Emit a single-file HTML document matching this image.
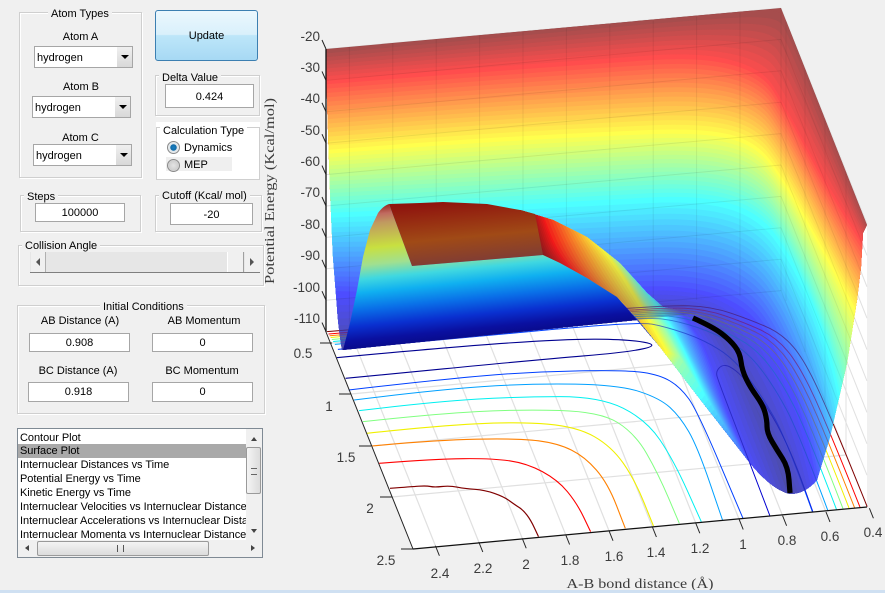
<!DOCTYPE html>
<html><head><meta charset="utf-8"><title>Surface Plot</title>
<style>
html,body{margin:0;padding:0;background:#f0f0f0;width:885px;height:593px;overflow:hidden}
body{position:relative;font-family:"Liberation Sans",sans-serif;font-size:11px;color:#000}
.a{position:absolute;white-space:nowrap}
.g{position:absolute;border:1px solid #cfcfcf;box-shadow:1px 1px 0 #fff,inset 1px 1px 0 #fff;box-sizing:border-box}
.t{position:absolute;background:#f0f0f0;padding:0 3px;white-space:nowrap;line-height:12px}
.c{position:absolute;text-align:center;white-space:nowrap;line-height:14px}
.i{position:absolute;background:#fff;border:1px solid #a6a6a6;box-sizing:border-box;text-align:center;line-height:19px}
.s{position:absolute;background:#fff;border:1px solid #a6a6a6;box-sizing:border-box;line-height:23px;padding-left:2px;width:99px;height:22px}
.s b{position:absolute;right:0;top:0;width:15px;height:20px;background:linear-gradient(#f0f0f0,#d8d8d8)}
.s b:after{content:"";position:absolute;left:4px;top:8px;border:4px solid transparent;border-top:4px solid #000;border-bottom:0}
svg{position:absolute;left:0;top:0}
.l{position:absolute;left:2px;height:14px;line-height:14px;white-space:nowrap;width:226px;overflow:hidden;letter-spacing:-.04px}
</style></head><body>

<svg id="plot" width="885" height="593" viewBox="0 0 885 593" xmlns="http://www.w3.org/2000/svg">
<defs>
<clipPath id="surf"><path d="M326,49 L781,8 L867,225 L863,233 L861,267 L857,300 L847,363 L830,437 L817,480 Q805,494 790,494 Q772,490 750,463 L703,403 L660,347 L637,320 L342,350 Q338,325 337,307 L333,257 L330,190 L327,100 Z"/></clipPath>
<clipPath id="fold"><path d="M520,210 L553,220 L587,237 L620,263 L647,293 L663,307 L730,320 L790,400 L800,494 L790,494 Q772,490 750,463 L703,403 L660,347 L637,318 L617,297 L587,278 L560,263 L543,255 Z"/></clipPath>
<linearGradient id="fs" gradientUnits="userSpaceOnUse" x1="380" y1="200" x2="395" y2="350">
<stop offset=".02" stop-color="#8f1a10"/><stop offset=".09" stop-color="#c06a60"/><stop offset=".15" stop-color="#c09a60"/><stop offset=".31" stop-color="#c8e040"/><stop offset=".42" stop-color="#a0e090"/><stop offset=".51" stop-color="#40d8e0"/><stop offset=".6" stop-color="#10b0f0"/><stop offset=".71" stop-color="#0a70e8"/><stop offset=".82" stop-color="#0a30d0"/><stop offset=".91" stop-color="#0a10a0"/><stop offset="1" stop-color="#080880"/>
</linearGradient>
<linearGradient id="cap" gradientUnits="userSpaceOnUse" x1="450" y1="202" x2="456" y2="268">
<stop offset="0" stop-color="#8f140e"/><stop offset=".55" stop-color="#a04a16"/><stop offset="1" stop-color="#7a3a3a"/>
</linearGradient>
<linearGradient id="dim" gradientUnits="userSpaceOnUse" x1="0" y1="240" x2="0" y2="320">
<stop offset="0" stop-color="#404060" stop-opacity="0"/><stop offset="1" stop-color="#404060" stop-opacity=".35"/>
</linearGradient>
</defs>
<polygon points="326,49 781,8 867,225 867,507 413,549 326,332" fill="#fff"/>
<g id="under"></g>
<g id="main" clip-path="url(#surf)"></g>
<g id="wallgrid" clip-path="url(#surf)"></g>
<g id="foldg" clip-path="url(#fold)"></g>
<g id="over" clip-path="url(#surf)"></g>
<path d="M343,350 L350,323 L357,290 L363,257 L370,230 L378,213 Q383,206 389,204 L412,266 L543,255 L560,263 L587,278 L617,297 L637,320 Z" fill="url(#fs)"/>
<path d="M389,204 L420,203 L443,202 L487,204 L520,210 L535,214 L543,255 L412,266 Z" fill="url(#cap)"/>
<g id="axes"></g>
<path id="traj" fill="none" stroke="#000" stroke-width="5.2" stroke-linejoin="round" d=""/>
<g font-family="Liberation Sans, sans-serif" font-size="13.5" fill="#3c3c3c" text-anchor="end">
<text x="320" y="41">-20</text><text x="320" y="72">-30</text><text x="320" y="103">-40</text><text x="320" y="135">-50</text><text x="320" y="166">-60</text><text x="320" y="197">-70</text><text x="320" y="229">-80</text><text x="320" y="260">-90</text><text x="320" y="292">-100</text><text x="320" y="323">-110</text>
</g>
<g font-family="Liberation Sans, sans-serif" font-size="13.5" fill="#3c3c3c" text-anchor="middle">
<text x="303" y="358">0.5</text><text x="329" y="411">1</text><text x="346" y="462">1.5</text><text x="370" y="513">2</text><text x="386" y="565">2.5</text>
<text x="873" y="537">0.4</text><text x="830" y="541">0.6</text><text x="787" y="545">0.8</text><text x="743" y="549">1</text><text x="700" y="553">1.2</text><text x="656" y="557">1.4</text><text x="614" y="561">1.6</text><text x="570" y="565">1.8</text><text x="526" y="569">2</text><text x="483" y="573">2.2</text><text x="440" y="578">2.4</text>
</g>
<text x="640" y="588" font-family="Liberation Serif, serif" font-size="14" fill="#3c3c3c" text-anchor="middle" textLength="147" lengthAdjust="spacingAndGlyphs">A-B bond distance (Å)</text>
<text transform="translate(274,191) rotate(-90)" font-family="Liberation Serif, serif" font-size="14" fill="#3c3c3c" text-anchor="middle" textLength="186" lengthAdjust="spacingAndGlyphs">Potential Energy (Kcal/mol)</text>
</svg>

<!-- Atom types -->
<div class="g" style="left:19px;top:12px;width:123px;height:166px"></div>
<div class="t" style="left:48px;top:8px">Atom Types</div>
<div class="c" style="left:19px;width:123px;top:30px">Atom A</div>
<div class="s" style="left:34px;top:46px">hydrogen<b></b></div>
<div class="c" style="left:19px;width:124px;top:80px">Atom B</div>
<div class="s" style="left:32px;top:96px">hydrogen<b></b></div>
<div class="c" style="left:19px;width:123px;top:131px">Atom C</div>
<div class="s" style="left:33px;top:144px">hydrogen<b></b></div>

<!-- Update -->
<div class="a" style="left:155px;top:10px;width:103px;height:51px;box-sizing:border-box;border:1px solid #3c7fb1;border-radius:3px;background:linear-gradient(#ebf7fd 0%,#d9f0fb 48%,#bde6f9 50%,#a7d9f4 100%);text-align:center;line-height:51px">Update</div>

<!-- Delta -->
<div class="g" style="left:155px;top:75px;width:105px;height:41px"></div>
<div class="t" style="left:159px;top:72px">Delta Value</div>
<div class="i" style="left:165px;top:84px;width:89px;height:24px;line-height:24px">0.424</div>

<!-- Calc type -->
<div class="a" style="left:156px;top:122px;width:104px;height:57px;background:#fff"></div>
<div class="g" style="left:156px;top:127px;width:104px;height:53px;box-shadow:none"></div>
<div class="t" style="left:160px;top:125px;background:#fff">Calculation Type</div>
<div class="a" style="left:166px;top:157px;width:66px;height:14px;background:#efefef"></div>
<div class="a" style="left:167px;top:141px;width:13px;height:13px;box-sizing:border-box;border-radius:50%;border:1px solid #8a8a8a;background:radial-gradient(circle,#1a7fc0 0,#0f6aa8 38%,#dfe6ea 45%,#f2f2f2 100%)"></div>
<div class="a" style="left:184px;top:142px;line-height:13px">Dynamics</div>
<div class="a" style="left:167px;top:159px;width:13px;height:13px;box-sizing:border-box;border-radius:50%;border:1px solid #8a8a8a;background:radial-gradient(circle,#e4e4e4,#cfcfcf 60%,#f2f2f2)"></div>
<div class="a" style="left:184px;top:159px;line-height:13px">MEP</div>

<!-- Steps -->
<div class="g" style="left:20px;top:195px;width:121px;height:37px"></div>
<div class="t" style="left:24px;top:191px">Steps</div>
<div class="i" style="left:35px;top:203px;width:90px;height:19px">100000</div>

<!-- Cutoff -->
<div class="g" style="left:155px;top:195px;width:107px;height:37px"></div>
<div class="t" style="left:159px;top:190px">Cutoff (Kcal/ mol)</div>
<div class="i" style="left:170px;top:203px;width:83px;height:22px;line-height:22px">-20</div>

<!-- Collision -->
<div class="g" style="left:18px;top:245px;width:246px;height:41px"></div>
<div class="t" style="left:22px;top:240px">Collision Angle</div>
<div class="a" style="left:30px;top:252px;width:230px;height:21px;background:#e6e6e6;border-bottom:1px solid #7f7f7f;box-sizing:border-box"></div>
<div class="a" style="left:31px;top:252px;width:15px;height:20px;background:#f0f0f0;border-right:1px solid #b0b0b0;box-sizing:border-box"></div>
<div class="a" style="left:36px;top:258px;border:4px solid transparent;border-right:4px solid #555;border-left:0"></div>
<div class="a" style="left:227px;top:252px;width:17px;height:20px;background:#f0f0f0;border-left:1px solid #fff;border-right:1px solid #a0a0a0;box-sizing:border-box"></div>
<div class="a" style="left:245px;top:252px;width:15px;height:20px;background:#f0f0f0;box-sizing:border-box"></div>
<div class="a" style="left:250px;top:258px;border:4px solid transparent;border-left:4px solid #555;border-right:0"></div>

<!-- Initial conditions -->
<div class="g" style="left:17px;top:305px;width:248px;height:109px"></div>
<div class="t" style="left:100px;top:301px">Initial Conditions</div>
<div class="c" style="left:19px;width:122px;top:314px">AB Distance (A)</div>
<div class="c" style="left:144px;width:120px;top:314px">AB Momentum</div>
<div class="i" style="left:29px;top:333px;width:101px;height:19px">0.908</div>
<div class="i" style="left:152px;top:333px;width:101px;height:19px">0</div>
<div class="c" style="left:18px;width:120px;top:364px">BC Distance (A)</div>
<div class="c" style="left:142px;width:120px;top:364px">BC Momentum</div>
<div class="i" style="left:28px;top:382px;width:101px;height:20px">0.918</div>
<div class="i" style="left:152px;top:382px;width:101px;height:20px">0</div>

<!-- List -->
<div class="a" style="left:17px;top:428px;width:246px;height:130px;box-sizing:border-box;border:1px solid #7f8a94;background:#fff;overflow:hidden">
<div class="a" style="left:0;top:15px;width:228px;height:14px;background:#a9a9a9"></div>
<div class="l" style="top:2px">Contour Plot</div>
<div class="l" style="top:15px">Surface Plot</div>
<div class="l" style="top:29px">Internuclear Distances vs Time</div>
<div class="l" style="top:43px">Potential Energy vs Time</div>
<div class="l" style="top:57px">Kinetic Energy vs Time</div>
<div class="l" style="top:71px">Internuclear Velocities vs Internuclear Distance</div>
<div class="l" style="top:85px">Internuclear Accelerations vs Internuclear Distance</div>
<div class="l" style="top:99px;height:12px">Internuclear Momenta vs Internuclear Distance</div>
<div class="a" style="left:228px;top:0;width:16px;height:128px;background:#f0f0f0"></div>
<div class="a" style="left:0;top:111px;width:244px;height:17px;background:#f0f0f0"></div>
<div class="a" style="left:233px;top:8px;border:3.5px solid transparent;border-bottom:4px solid #444;border-top:0"></div>
<div class="a" style="left:233px;top:100px;border:3.5px solid transparent;border-top:4px solid #444;border-bottom:0"></div>
<div class="a" style="left:228px;top:18px;width:15px;height:47px;box-sizing:border-box;border:1px solid #9a9a9a;border-radius:2px;background:linear-gradient(90deg,#f4f4f4,#dcdcdc)"></div>
<div class="a" style="left:233px;top:39px;width:6px;height:5px;border-top:1px solid #666;border-bottom:1px solid #666"></div>
<div class="a" style="left:19px;top:112px;width:172px;height:15px;box-sizing:border-box;border:1px solid #9a9a9a;border-radius:2px;background:linear-gradient(#f4f4f4,#dcdcdc)"></div>
<div class="a" style="left:7px;top:116px;border:3.5px solid transparent;border-right:4px solid #444;border-left:0"></div>
<div class="a" style="left:233px;top:116px;border:3.5px solid transparent;border-left:4px solid #444;border-right:0"></div>
<div class="a" style="left:99px;top:116px;width:5px;height:7px;border-left:1px solid #555;border-right:1px solid #555"></div>
</div>

<div class="a" style="left:0;top:590px;width:885px;height:3px;background:#cfe0f2"></div>

<script>
(function(){
var NS="http://www.w3.org/2000/svg";
function E(par,tag,attrs){var e=document.createElementNS(NS,tag);for(var k in attrs)e.setAttribute(k,attrs[k]);par.appendChild(e);return e;}
function jet(t){var f=function(v){return Math.max(0,Math.min(1,1.5-Math.abs(4*t-v)));};return[f(3),f(2),f(1)];}
function col(t,a,w){var c=jet(t);return"rgb("+c.map(function(v){return Math.round(v*a*255+w);}).join(",")+")";}
function smooth(p){var d="M"+p[0][0]+","+p[0][1];for(var i=1;i<p.length-1;i++){var mx=(p[i][0]+p[i+1][0])/2,my=(p[i][1]+p[i+1][1])/2;d+=" Q"+p[i][0]+","+p[i][1]+" "+mx+","+my;}var l=p[p.length-1];return d+" L"+l[0]+","+l[1];}
function interp(keys,t){for(var i=0;i<keys.length-1;i++){var a=keys[i],b=keys[i+1];if(t<=a.t&&t>=b.t){var u=(a.t-t)/(a.t-b.t);return a.p.map(function(q,j){return[q[0]+(b.p[j][0]-q[0])*u,q[1]+(b.p[j][1]-q[1])*u];});}}return keys[keys.length-1].p;}

/* main surface */
var keys=[
{t:1,p:[[300,52],[450,38],[600,24],[700,15],[775,8],[788,20],[830,131],[890,280]]},
{t:.875,p:[[300,82],[450,70],[600,59],[700,52],[762,68],[785,105],[830,190],[885,275]]},
{t:.625,p:[[300,152],[450,140],[600,132],[700,128],[755,140],[785,180],[835,270],[872,340]]},
{t:.375,p:[[300,214],[450,208],[600,200],[700,195],[760,212],[795,262],[827,335],[850,440]]},
{t:.125,p:[[300,290],[450,295],[600,288],[690,285],[745,305],[775,345],[805,420],[822,510]]},
{t:0,p:[[300,350],[450,335],[600,322],[680,318],[705,330],[742,395],[772,450],[805,530]]}];
var m=document.getElementById("main");
E(m,"rect",{x:300,y:0,width:585,height:593,fill:col(1,.7,76.5)});
for(var n=64;n>=0;n--){var t=n/64,p=interp(keys,t);E(m,"path",{d:smooth(p)+" L900,600 L290,600 Z",fill:col(t,.7,76.5)});}

/* fold sheet */
var fk=[
{t:1,p:[[530,205],[535,235],[545,260],[590,300],[610,330]]},
{t:.875,p:[[540,205],[550,235],[565,262],[600,300],[620,330]]},
{t:.625,p:[[600,245],[620,270],[635,295],[650,320],[668,352]]},
{t:.5,p:[[620,262],[633,280],[643,300],[660,320],[680,357]]},
{t:.375,p:[[640,285],[647,293],[660,307],[680,340],[705,395]]},
{t:.125,p:[[665,290],[690,323],[707,350],[730,420],[755,472]]},
{t:.03,p:[[690,290],[725,335],[748,390],[770,440],[790,500]]}];
var f=document.getElementById("foldg");
for(n=2;n<=64;n++){t=n/64;p=interp(fk,t);var s=Math.max(0,Math.min(1,(t-.5)/.375));E(f,"path",{d:smooth(p)+" L520,620 L440,150 Z",fill:col(t,.7+.15*s,76.5-51.5*s)});}
E(f,"polygon",{points:"500,150 720,150 720,311 500,334",fill:"url(#dim)"});

/* grids */
var u=document.getElementById("under"),w=document.getElementById("wallgrid");
function line(g,a,b,c,d,s,o,wd){E(g,"line",{x1:a,y1:b,x2:c,y2:d,stroke:s,"stroke-opacity":o,"stroke-width":wd||1});}
var xt=[];for(var i=-1;i<=10;i++)xt.push([826-43.4*i,512+3.75*i]);
var yt=[[332,343],[351,394],[371,446],[392,497]];
xt.forEach(function(q,i){if(i==0||i>10)return;
 line(u,q[0],q[1],q[0]-86,q[1]-216,"#e0e0e0",1,1.2);
 line(u,q[0]-86,q[1]-216,q[0]-86,q[1]-216-283,"#e0e0e0",1);
 line(w,q[0]-86,q[1]-216,q[0]-86,q[1]-216-283,"#000",.07);
});
yt.forEach(function(q){
 line(u,q[0],q[1],q[0]+454,q[1]-42,"#e0e0e0",1,1.2);
 var X=q[0]+454,Y=q[1]-42,top=8+(X-781)*2.52;
 line(u,X,Y,X,top,"#e0e0e0",1);line(w,X,Y,X,top,"#000",.06);
});
for(var k=0;k<10;k++){var y=49+31.4*k;
 line(u,326,y,781,y-41,"#e0e0e0",1);line(u,781,y-41,867,y-41+216,"#e0e0e0",1);
 line(w,326,y,781,y-41,"#000",.07);line(w,781,y-41,867,y-41+216,"#000",.06);
}
line(w,781,8,781,291,"#000",.07);

/* floor contours in zoom coordinates */
var Z=function(q){return q.map(function(v){return[280+v[0]*.3858,290+v[1]/3];});};
var C=[
["#000090",[[147,203],[430,172],[740,147],[900,148],[985,165],[900,187],[680,208],[170,265]],1.1],
["#0040ff",[[178,300],[400,270],[650,245],[900,240],[985,255],[1037,291],[1081,360],[1200,685]],1],
["#00a0ff",[[192,330],[400,300],[650,280],[880,285],[985,325],[1037,380],[1082,470],[1147,690]],1],
["#00f0f0",[[205,362],[400,335],[620,320],[830,320],[950,390],[1020,510],[1092,695]],1],
["#80ff80",[[215,395],[400,372],[620,358],[830,365],[920,430],[980,550],[1035,700]],1],
["#f0f000",[[225,430],[400,408],[620,395],[770,410],[860,470],[920,570],[968,708]],1.1],
["#ff8000",[[238,468],[400,450],[620,445],[720,460],[790,500],[850,580],[895,715]],1.1],
["#ff0000",[[257,520],[400,507],[550,505],[640,520],[720,570],[770,640],[805,725]],1.1],
["#800000",[[285,595],[340,590],[380,587],[400,592],[440,587],[480,596],[530,600],[580,620],[610,645],[630,660],[650,690],[670,740]],1.2],
["#0000d0",[[1270,678],[1218,519],[1135,270],[1130,245],[1145,225],[1166,228],[1200,260],[1270,360],[1330,500],[1381,665]],1]
];
var fanO=[[1522,650],[1435,400],[1360,210],[1300,130],[1220,90],[1120,50],[1000,45],[500,90],[122,125]];
var fanI=[[1380,665],[1310,440],[1250,320],[1180,210],[1100,150],[1000,110],[930,95],[500,140],[150,178]];
var fc=["#800000","#ff0000","#ff8000","#f0f000","#80ff80","#00f0f0","#00a0ff","#0040ff"];
var fr=[0,.13,.23,.33,.44,.56,.72,1];
fc.forEach(function(c,i){var s=fr[i];C.push([c,fanO.map(function(q,j){return[q[0]+(fanI[j][0]-q[0])*s,q[1]+(fanI[j][1]-q[1])*s];}),1]);});
var o=document.getElementById("over");
C.forEach(function(c){var d=smooth(Z(c[1]));E(u,"path",{d:d,fill:"none",stroke:c[0],"stroke-width":c[2]});
 E(o,"path",{d:d,fill:"none",stroke:"#2828a0","stroke-width":.9,"stroke-opacity":.55});
 E(o,"path",{d:d,fill:"none",stroke:c[0],"stroke-width":.9,"stroke-opacity":.25});});

/* axes */
var a=document.getElementById("axes");
line(a,326,49,326,332,"#111",1,1.3);line(a,326,332,413,549,"#222",1,1);line(a,413,549,867,507,"#111",1,1.2);
for(k=0;k<10;k++){y=49+31.4*k;line(a,322,y-9,326,y,"#222",1);}
[[332,343],[351,394],[371,446],[392,497],[413,549]].forEach(function(q){line(a,q[0]-12,q[1],q[0],q[1],"#222",1);});
xt.forEach(function(q,i){if(i>10)return;line(a,q[0],q[1],q[0]+4,q[1]+10,"#222",1);});

/* trajectory */
document.getElementById("traj").setAttribute("d",smooth([[693,318],[713,327],[730,340],[740,353],[742,370],[750,387],[763,405],[767,420],[767,433],[777,450],[788,467],[790,493]]));
})();
</script>
</body></html>
